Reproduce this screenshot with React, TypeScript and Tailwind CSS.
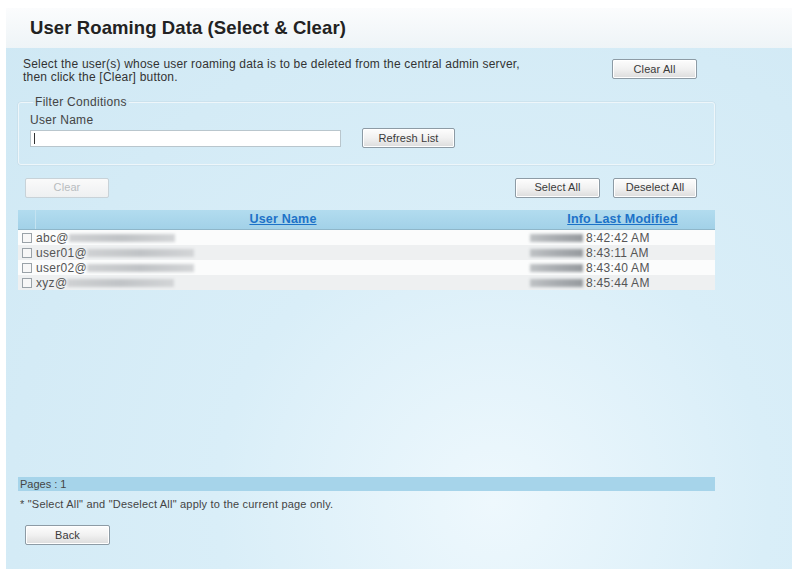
import React from "react";

const font = { fontFamily: '"Liberation Sans", Arial, sans-serif' };

function Btn({ children, w, disabled }: { children: React.ReactNode; w: string; disabled?: boolean }) {
  return (
    <div
      className={`${w} h-[20px] flex items-center justify-center rounded-[2px] border text-[11px] tracking-[0.1px] ${
        disabled
          ? "border-[#c8d2d8] bg-gradient-to-b from-[#fafafa] to-[#eef0f1] text-[#b8bcbf]"
          : "border-[#8d9ba5] bg-gradient-to-b from-[#fdfdfd] via-[#f1f1f1] to-[#dcdcdc] text-[#3a3a3a] shadow-[inset_0_0_0_1px_#ffffff]"
      }`}
    >
      {children}
    </div>
  );
}

function Blur({ w, dark }: { w: string; dark?: boolean }) {
  return (
    <div
      className={`${w} h-[8px] blur-[1.5px] ${
        dark
          ? "bg-gradient-to-r from-[#bfc2c5] via-[#a8acb0] to-[#969a9e]"
          : "bg-gradient-to-r from-[#cfd1d3] via-[#c0c3c6] to-[#d3d5d7]"
      }`}
    />
  );
}

const rows = [
  { name: "abc@", bw: "w-[106px]", time: "8:42:42 AM" },
  { name: "user01@", bw: "w-[107px]", time: "8:43:11 AM" },
  { name: "user02@", bw: "w-[107px]", time: "8:43:40 AM" },
  { name: "xyz@", bw: "w-[107px]", time: "8:45:44 AM" },
];

export default function App() {
  return (
    <div className="w-[792px] h-[573px] bg-white pt-[8px] pl-[6px] pb-[4px] overflow-hidden" style={font}>
      <div className="h-full flex flex-col bg-[radial-gradient(ellipse_at_62%_88%,#eef8fd_0%,#d9eef8_40%,#cfe8f4_100%)]">
        <div className="h-[40px] shrink-0 flex items-center pl-[24px] bg-gradient-to-b from-[#fbfcfd] to-[#eef4f7]">
          <h1 className="text-[18.5px] font-bold text-[#222] tracking-[0.1px]">User Roaming Data (Select &amp; Clear)</h1>
        </div>
        <div className="pl-[12px] w-[709px] flex flex-col">
          <div className="flex justify-between items-start mt-[10px]">
            <p className="pl-[5px] text-[12px] tracking-[0.2px] leading-[13px] text-[#333]">
              Select the user(s) whose user roaming data is to be deleted from the central admin server,
              <br />
              then click the [Clear] button.
            </p>
            <div className="mt-[1px] mr-[18px]">
              <Btn w="w-[85px]">Clear All</Btn>
            </div>
          </div>

          <fieldset className="mt-[12px] h-[69px] border border-[#eef6fa] rounded-[3px] pl-[11px] pr-0 pb-0 shadow-[0_0_0_0.5px_#c3d9e5]">
            <legend className="ml-[3px] px-[2px] text-[12px] tracking-[0.3px] leading-[12px] text-[#444]">Filter Conditions</legend>
            <div className="text-[12px] tracking-[0.3px] leading-[12px] text-[#444] mt-[6px]">User Name</div>
            <div className="flex items-center mt-[2px]">
              <div className="w-[311px] h-[17px] bg-white border border-[#b9c6cd] flex items-center pl-[3px]">
                <div className="w-[1px] h-[11px] bg-[#333]" />
              </div>
              <div className="ml-[21px]">
                <Btn w="w-[93px]">Refresh List</Btn>
              </div>
            </div>
          </fieldset>

          <div className="flex justify-between items-center mt-[12px] h-[21px]">
            <div className="ml-[7px]">
              <Btn w="w-[84px]" disabled>
                Clear
              </Btn>
            </div>
            <div className="flex gap-[13px] mr-[18px]">
              <Btn w="w-[85px]">Select All</Btn>
              <Btn w="w-[84px]">Deselect All</Btn>
            </div>
          </div>

          <div className="mt-[12px] w-[697px]">
            <div className="flex h-[20px] bg-gradient-to-b from-[#b2dcef] to-[#a2d1e8] border-b border-[#8fb6c9] text-[12.5px] tracking-[0.2px] font-bold text-[#1c72c8]">
              <div className="w-[18px] border-r border-[#c4e3f1]" />
              <div className="w-[494px] flex items-center justify-center underline">User Name</div>
              <div className="flex-1 flex items-center justify-center underline">Info Last Modified</div>
            </div>
            {rows.map((r, i) => (
              <div
                key={r.name}
                className={`flex h-[15px] items-center text-[12px] tracking-[0.3px] text-[#555] ${
                  i % 2 === 0 ? "bg-[#fbfcfc]" : "bg-[#eef0f1]"
                }`}
              >
                <div className="w-[18px] flex justify-center">
                  <div className="w-[10px] h-[10px] border border-[#9aa2a8] bg-[#f7f7f7]" />
                </div>
                <div className="w-[494px] flex items-center">
                  <span>{r.name}</span>
                  <Blur w={r.bw} />
                </div>
                <div className="flex-1 flex items-center">
                  <Blur w="w-[53px]" dark />
                  <span className="ml-[3px]">{r.time}</span>
                </div>
              </div>
            ))}
          </div>

          <div className="mt-[187px] w-[697px] h-[14px] bg-[#a6d4ea] flex items-center pl-[2px] text-[11px] text-[#444]">
            Pages : 1
          </div>
          <div className="mt-[7px] pl-[2px] text-[11px] tracking-[0.2px] leading-[12px] text-[#444]">
            * "Select All" and "Deselect All" apply to the current page only.
          </div>
          <div className="mt-[15px] ml-[7px]">
            <Btn w="w-[85px]">Back</Btn>
          </div>
        </div>
      </div>
    </div>
  );
}
